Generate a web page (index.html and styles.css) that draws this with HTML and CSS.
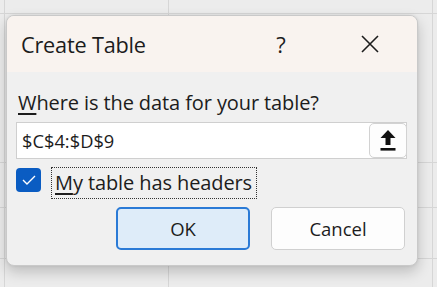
FILE: index.html
```html
<!DOCTYPE html>
<html>
<head>
<meta charset="utf-8">
<link rel="stylesheet" href="styles.css">
</head>
<body>
<div class="sheet">
  <div class="dialog">
    <div class="titlebar">
      <span class="title">Create Table</span>
      <span class="help">?</span>
      <span class="close">
        <svg width="18" height="18" viewBox="0 0 18 18"><path d="M1 1 L17 17 M17 1 L1 17" stroke="#1c1c1c" stroke-width="1.6" fill="none"/></svg>
      </span>
    </div>
    <div class="body">
      <div class="prompt"><u>W</u>here is the data for your table?</div>
      <div class="range">
        <span class="range-text">$C$4:$D$9</span>
        <button class="collapse">
          <svg width="16" height="22" viewBox="0 0 16 22"><path d="M8 0 L15.5 8 H10.5 V15 H5.5 V8 H0.5 Z" fill="#111"/><rect x="0.5" y="18" width="15" height="2.6" fill="#111"/></svg>
        </button>
      </div>
      <div class="check-row">
        <span class="checkbox">
          <svg width="14" height="10" viewBox="0 0 14 10"><path d="M1 5 L5 9 L13 1" stroke="#fff" stroke-width="1.4" fill="none"/></svg>
        </span>
        <span class="check-label"><u>M</u>y table has headers</span>
      </div>
      <div class="buttons">
        <button class="btn btn-ok">OK</button>
        <button class="btn btn-cancel">Cancel</button>
      </div>
    </div>
  </div>
</div>
</body>
</html>
```

FILE: styles.css
```css
html, body {
  margin: 0;
  padding: 0;
}
body {
  width: 437px;
  height: 287px;
  overflow: hidden;
  background-color: #ececec;
  background-image:
    linear-gradient(to right, transparent 4px, #d6d6d6 4px, #d6d6d6 5px, transparent 5px),
    linear-gradient(to right, transparent 168px, #d6d6d6 168px, #d6d6d6 169px, transparent 169px),
    linear-gradient(to right, transparent 432px, #d6d6d6 432px, #d6d6d6 433px, transparent 433px),
    linear-gradient(to bottom, transparent 13px, #d6d6d6 13px, #d6d6d6 14px, transparent 14px),
    linear-gradient(to bottom, transparent 162px, #d6d6d6 162px, #d6d6d6 163px, transparent 163px),
    linear-gradient(to bottom, transparent 207px, #d6d6d6 207px, #d6d6d6 208px, transparent 208px),
    linear-gradient(to bottom, transparent 258px, #d6d6d6 258px, #d6d6d6 259px, transparent 259px);
  font-family: "Open Sans", "Noto Sans", sans-serif;
  color: #1c1c1c;
}
.sheet {
  padding: 15px 0 0 6px;
}
.dialog {
  width: 410px;
  height: 249px;
  border: 1px solid #c9c9c9;
  border-radius: 8px;
  background: #f0f0f0;
  box-shadow: 0 6px 14px rgba(0, 0, 0, 0.2), 0 0 3px rgba(0, 0, 0, 0.08);
  overflow: hidden;
  display: flex;
  flex-direction: column;
}
.titlebar {
  height: 56px;
  background: #f9f3ef;
  display: flex;
  align-items: center;
  padding-left: 14px;
}
.title {
  font-size: 21.7px;
  flex: 1;
  letter-spacing: -0.2px;
  padding-top: 1px;
}
.help {
  font-size: 22px;
  width: 20px;
  text-align: center;
  margin-right: 70px;
}
.close {
  width: 18px;
  height: 18px;
  margin-right: 38px;
  display: flex;
}
.body {
  padding: 0 10px 0 9px;
  display: flex;
  flex-direction: column;
}
.prompt {
  font-size: 20px;
  margin-top: 19px;
  padding-left: 2px;
  line-height: 24px;
  letter-spacing: -0.1px;
}
.prompt u, .check-label u {
  text-underline-offset: 3px;
}
.range {
  margin-top: 7px;
  height: 35px;
  background: #fff;
  border: 1px solid #cfcfcf;
  display: flex;
  align-items: center;
  justify-content: space-between;
}
.range-text {
  font-size: 18.3px;
  padding-left: 5px;
}
.collapse {
  width: 38px;
  height: 35px;
  margin: 0;
  margin-right: -1px;
  padding: 0;
  border: 1px solid #d2d2d2;
  border-radius: 5px;
  background: #fdfdfd;
  display: flex;
  align-items: center;
  justify-content: center;
}
.check-row {
  margin-top: 8px;
  display: flex;
  align-items: flex-start;
  gap: 10px;
}
.checkbox {
  margin-top: 1px;
  width: 25px;
  height: 24px;
  border-radius: 4px;
  background: #0a5cc2;
  display: flex;
  align-items: center;
  justify-content: center;
}
.check-label {
  font-size: 20px;
  border: 1px dotted #333;
  padding: 2px 4px 2px 3px;
  line-height: 26px;
  letter-spacing: -0.1px;
}
.buttons {
  margin-top: 8px;
  display: flex;
  justify-content: flex-end;
  gap: 21px;
  padding-right: 2px;
}
.btn {
  width: 134px;
  height: 43px;
  border-radius: 5px;
  font-family: "Open Sans", "Noto Sans", sans-serif;
  font-size: 18.5px;
  color: #1c1c1c;
  margin: 0;
}
.btn-ok {
  background: #deecf9;
  border: 2px solid #2a7ad6;
}
.btn-cancel {
  background: #fdfdfd;
  border: 1px solid #d0d0d0;
}
```
